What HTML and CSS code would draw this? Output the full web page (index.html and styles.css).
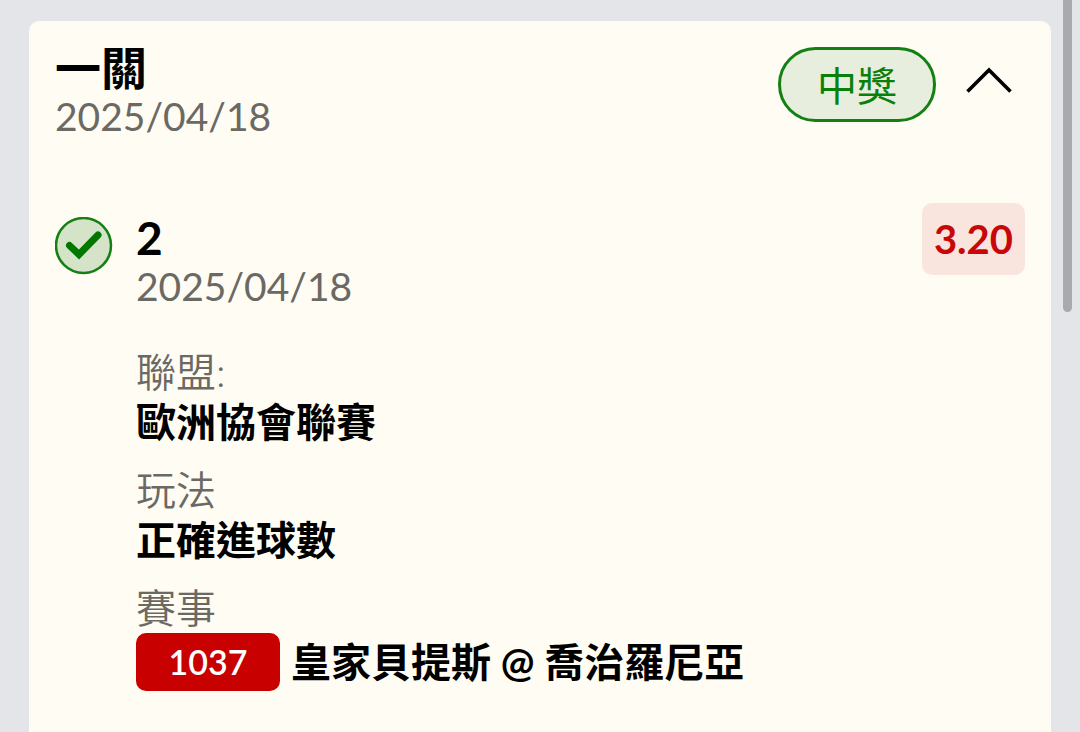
FILE: index.html
```html
<!DOCTYPE html>
<html lang="zh-Hant">
<head>
    <meta charset="UTF-8">
    <meta name="viewport" content="width=device-width, initial-scale=1.0">
    <title>投注紀錄</title>
    <link rel="stylesheet" href="styles.css">
</head>
<body>

    <main class="card">
        <header class="card-header">
            <div class="heading">
                <h1 class="title">一關</h1>
                <time class="date" datetime="2025-04-18">2025/04/18</time>
            </div>
            <span class="status">中獎</span>
            <button class="toggle" type="button" aria-expanded="true" aria-label="收合">
                <svg width="46" height="28" viewBox="0 0 46 28" fill="none" stroke="#000" stroke-width="3.6">
                    <path d="M1.5 25.5 L23 4 L44.5 25.5"/>
                </svg>
            </button>
        </header>

        <section class="bet">
            <svg class="check" width="58" height="58" viewBox="0 0 58 58">
                <circle cx="28.5" cy="28.5" r="27.5" fill="#d5e3c9" stroke="#138013" stroke-width="2.5"/>
                <path d="M14.5 28.5 L24 37.5 L43 18" fill="none" stroke="#007800" stroke-width="7" stroke-linecap="round"/>
            </svg>
            <div class="bet-body">
                <h2 class="title">2</h2>
                <time class="date" datetime="2025-04-18">2025/04/18</time>

                <dl class="details">
                    <div>
                        <dt>聯盟:</dt>
                        <dd>歐洲協會聯賽</dd>
                    </div>
                    <div>
                        <dt>玩法</dt>
                        <dd>正確進球數</dd>
                    </div>
                    <div>
                        <dt>賽事</dt>
                        <dd class="match"><span class="match-no">1037</span>皇家貝提斯 @ 喬治羅尼亞</dd>
                    </div>
                </dl>
            </div>
            <span class="odds">3.20</span>
        </section>
    </main>

    <div class="scroll-thumb"></div>

</body>
</html>
```

FILE: styles.css
```css
body {
    margin: 0;
    padding: 21px 29px 0;
    min-height: 100vh;
    box-sizing: border-box;
    display: flex;
    overflow: hidden;
    background: #e4e5e8;
    color: #000;
    font-family: Lato, "Noto Sans CJK TC", sans-serif;
    font-size: 40px;
    line-height: 48px;
}
.card {
    flex: 1;
    padding: 23px 26px 40px;
    border-radius: 10px 10px 0 0;
    background: #fffcf3;
}
.card-header {
    display: flex;
    align-items: flex-start;
}
.heading {
    flex: 1;
}
.title {
    margin: 0;
    font-size: 46px;
    font-weight: 700;
    line-height: 48px;
}
.date {
    display: block;
    color: #6b6963;
    font-size: 39px;
}
.status {
    box-sizing: border-box;
    height: 75px;
    margin-top: 3px;
    padding: 0 36px;
    border: 3px solid #138013;
    border-radius: 38px;
    background: #e8eedd;
    color: #0a800a;
    line-height: 72px;
}
.toggle {
    margin: 22px 13px 0 30px;
    padding: 0;
    border: 0;
    background: none;
    cursor: pointer;
}
.toggle svg {
    display: block;
}
.bet {
    display: flex;
    align-items: flex-start;
    margin-top: 63px;
}
.check {
    margin-top: 14px;
}
.bet-body {
    flex: 1;
    margin-left: 23px;
    padding-top: 11px;
}
.odds {
    padding: 0 12px;
    border-radius: 10px;
    background: #fae5de;
    color: #c80808;
    font-weight: 700;
    line-height: 72px;
}
.details {
    display: grid;
    gap: 18px;
    margin: 37px 0 0;
    line-height: 50px;
}
.details dt {
    color: #6b6963;
    font-weight: 350;
}
.details dd {
    margin: 0;
    font-weight: 700;
}
.details .match {
    display: flex;
    align-items: center;
    gap: 11px;
}
.match-no {
    width: 144px;
    border-radius: 10px;
    background: #c80000;
    color: #fff;
    font-size: 34px;
    font-weight: 600;
    line-height: 58px;
    text-align: center;
}
.scroll-thumb {
    position: fixed;
    top: -10px;
    right: 8px;
    width: 9px;
    height: 322px;
    border-radius: 5px;
    background: #a9aaac;
}
```
